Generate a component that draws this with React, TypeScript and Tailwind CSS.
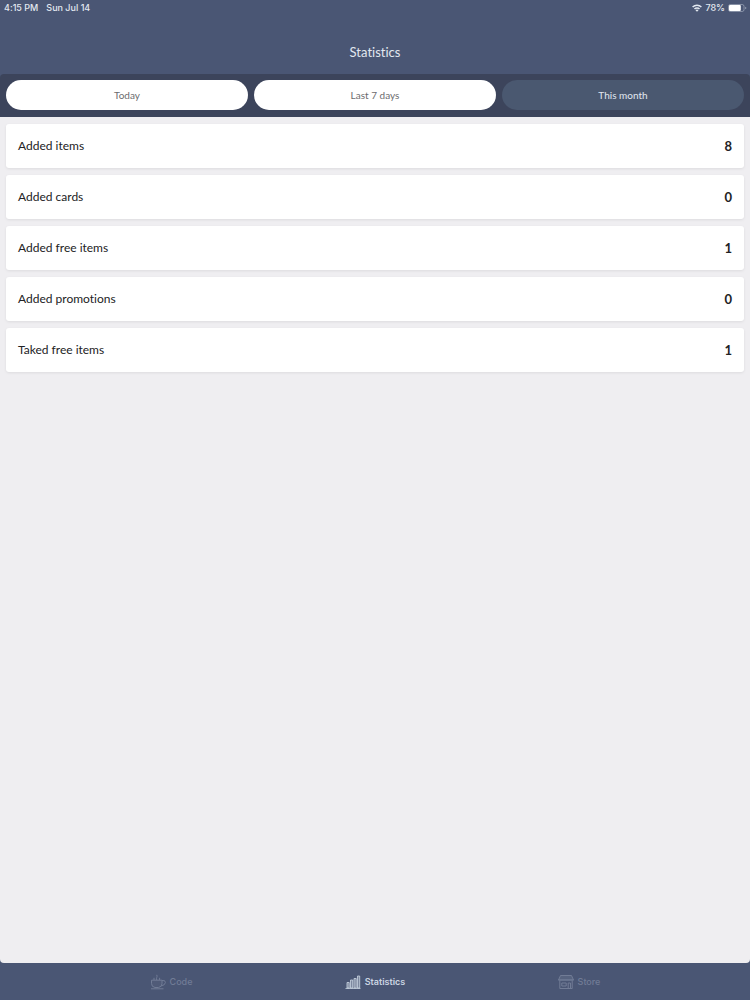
import { useState, type ReactNode } from 'react';

type Period = 'today' | 'week' | 'month';

type Stat = {
  label: string;
  value: number;
};

type Tab = {
  label: string;
  href: string;
  icon: ReactNode;
};

const periods: { id: Period; label: string }[] = [
  { id: 'today', label: 'Today' },
  { id: 'week', label: 'Last 7 days' },
  { id: 'month', label: 'This month' },
];

const stats: Stat[] = [
  { label: 'Added items', value: 8 },
  { label: 'Added cards', value: 0 },
  { label: 'Added free items', value: 1 },
  { label: 'Added promotions', value: 0 },
  { label: 'Taked free items', value: 1 },
];

function CupIcon() {
  return (
    <svg className="h-4 w-4" viewBox="0 0 16 16" fill="none" stroke="currentColor" aria-hidden="true">
      <path d="M1.5 6.2h10.5v3.3q0 3.5-3.5 4H5q-3.5-.5-3.5-4z" fill="currentColor" fillOpacity=".15" />
      <path d="M12 6.5q3.5-.6 3.4 2-.2 2.8-4.4 3.4M1 14.8h12.5" />
      <path d="M4 6V3.8M6.8 6c-1.3-1.8 1-2.6 0-5.2M9.6 6V3.8" />
    </svg>
  );
}

function ChartIcon() {
  return (
    <svg className="h-4 w-4" viewBox="0 0 16 16" fill="none" stroke="currentColor" strokeWidth=".8" aria-hidden="true">
      <path d="M2 8.5h2.2V14H2zM5.5 6h2.2v8H5.5zM9 4.5h2.2V14H9zM12.5 2h2.2v12h-2.2z" fill="currentColor" fillOpacity=".4" />
      <path d="M.5 14.5h15" />
    </svg>
  );
}

function StoreIcon() {
  return (
    <svg className="h-4 w-4" viewBox="0 0 16 16" fill="none" stroke="currentColor" aria-hidden="true">
      <path d="M2.5 1.5h11l2 4.5H.5z" fill="currentColor" fillOpacity=".35" />
      <path d="M.5 6h15M1.8 6.5v8h12.4v-8M3.8 9h4.4v3H3.8zM10.2 14.5V9h2.3v5.5" />
    </svg>
  );
}

const tabs: Tab[] = [
  { label: 'Code', href: '#code', icon: <CupIcon /> },
  { label: 'Statistics', href: '#statistics', icon: <ChartIcon /> },
  { label: 'Store', href: '#store', icon: <StoreIcon /> },
];

function StatusBar() {
  return (
    <div className="flex h-4 items-center justify-between pr-[3px] pl-1 font-['Inter',sans-serif] text-[9px] font-medium text-slate-200">
      <div className="flex gap-2">
        <span>4:15 PM</span>
        <span>Sun Jul 14</span>
      </div>
      <div className="flex items-center gap-[3px]">
        <svg className="h-2 w-2.5" viewBox="0 0 20 16" fill="none" stroke="currentColor" strokeWidth="3" aria-hidden="true">
          <path d="M1.2 6a12.5 12.5 0 0 1 17.6 0M5 10a7 7 0 0 1 10 0" />
          <path d="M10 15.5 7 12.4a4.3 4.3 0 0 1 6 0z" fill="currentColor" stroke="none" />
        </svg>
        <span>78%</span>
        <svg className="h-2 w-[19px]" viewBox="0 0 19 8" aria-hidden="true">
          <rect x=".5" y=".5" width="15.5" height="7" rx="1.8" fill="none" stroke="currentColor" strokeOpacity=".4" />
          <rect x="1" y="1" width="11.8" height="6" rx="1" fill="white" />
          <path d="M17.2 2.7v2.6q1.2-.4 1.2-1.3t-1.2-1.3z" fill="currentColor" fillOpacity=".5" />
        </svg>
      </div>
    </div>
  );
}

function periodClass(isActive: boolean) {
  return [
    'h-[30px] flex-1 rounded-full text-[10px]',
    isActive ? 'bg-[#4a5870] text-slate-200' : 'bg-white text-[#6b6b6e]',
  ].join(' ');
}

export default function App() {
  const [period, setPeriod] = useState<Period>('month');

  return (
    <div className="flex min-h-screen flex-col bg-[#4a5674] font-['Lato',sans-serif] [font-variant-ligatures:none]">
      <header className="text-slate-200">
        <StatusBar />
        <h1 className="pt-6 pb-2.5 text-center text-[13px] leading-6">Statistics</h1>
      </header>

      <div className="flex gap-1.5 rounded-t-sm bg-[#3c445b] px-1.5 pt-1.5 pb-[7px]">
        {periods.map((item) => (
          <button
            key={item.id}
            type="button"
            aria-pressed={period === item.id}
            onClick={() => setPeriod(item.id)}
            className={periodClass(period === item.id)}
          >
            {item.label}
          </button>
        ))}
      </div>

      <main className="flex-1 rounded-b-sm bg-[#efeef1] px-1.5 py-[7px]">
        <dl className="flex flex-col gap-[7px]">
          {stats.map((stat) => (
            <div
              key={stat.label}
              className="flex h-11 items-center justify-between rounded-[3px] bg-white px-3 text-xs leading-6 text-[#222224] shadow-[0_1px_3px_rgba(0,0,0,0.08)]"
            >
              <dt>{stat.label}</dt>
              <dd className="text-[13px] font-bold">{stat.value}</dd>
            </div>
          ))}
        </dl>
      </main>

      <nav className="mx-auto grid h-[37px] w-full max-w-[612px] grid-cols-3 font-['Inter',sans-serif] text-[9px]">
        {tabs.map((tab) => {
          const isActive = tab.label === 'Statistics';

          return (
            <a
              key={tab.label}
              href={tab.href}
              aria-current={isActive ? 'page' : undefined}
              className={`flex items-center justify-center gap-1 pt-px ${isActive ? 'font-semibold text-slate-300' : 'font-medium text-[#717c96]'}`}
            >
              {tab.icon}
              <span>{tab.label}</span>
            </a>
          );
        })}
      </nav>
    </div>
  );
}
